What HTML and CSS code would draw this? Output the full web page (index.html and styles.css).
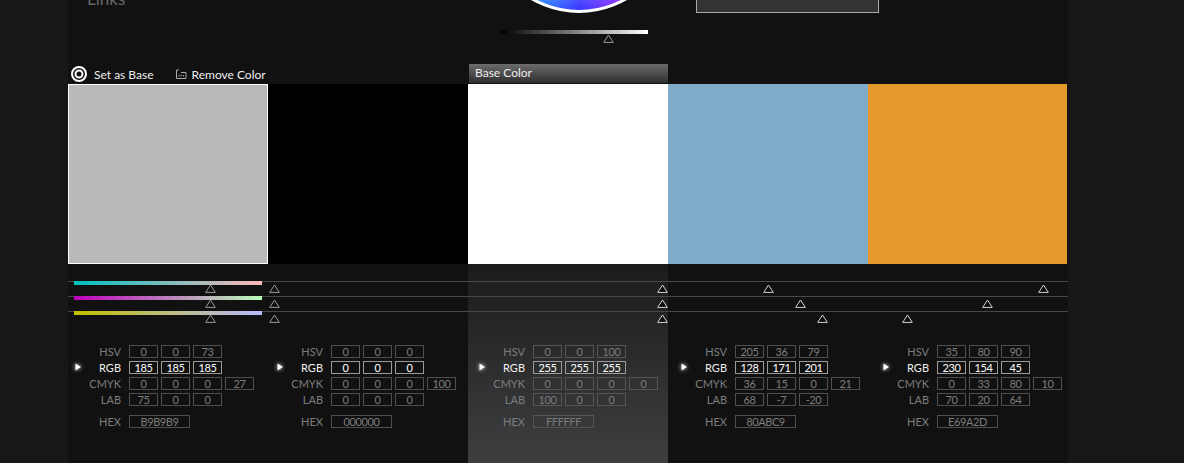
FILE: index.html
```html
<!DOCTYPE html>
<html lang="en">
<head>
  <meta charset="UTF-8">
  <title>Color Harmony</title>
  <link rel="stylesheet" href="styles.css">
</head>
<body>
  <div class="panel">
    <div class="top">
      <div class="links">Links</div>
      <div class="picker">
        <div class="wheel"></div>
        <div class="bright">
          <svg class="thumb thumb-dim" style="left:103px" width="11" height="9" viewBox="0 0 11 9"><polygon points="5.5,1 10.3,8.4 0.7,8.4"/></svg>
        </div>
      </div>
      <div class="preview"></div>
    </div>

    <div class="cols">
      <div class="col col-selected">
        <div class="head">
          <a class="action">
            <svg width="16" height="18" viewBox="0 0 16 18"><circle cx="8" cy="9" r="7" fill="none" stroke="#fff" stroke-width="2"/><circle cx="8" cy="9" r="3.5" fill="none" stroke="#fff" stroke-width="2"/></svg>
            Set as Base
          </a>
          <a class="action action-remove">
            <svg width="11" height="10" viewBox="0 0 11 10"><path d="M.5 1v8.500h9.500V3.500H5M.5 1H3M3 7.500V6M5 7.500V5.500M7.500 7.500V6" fill="none" stroke="#aaa"/></svg>
            Remove Color
          </a>
        </div>
        <div class="swatch swatch-current" style="background:#b9b9b9"></div>
        <div class="body">
          <div class="slider">
            <div class="bar bar-h"></div>
            <svg class="thumb thumb-dim" style="left:137px" width="11" height="9" viewBox="0 0 11 9"><polygon points="5.5,1 10.300,8.400 .7,8.400"/></svg>
          </div>
          <div class="slider">
            <div class="bar bar-s"></div>
            <svg class="thumb thumb-dim" style="left:137px" width="11" height="9" viewBox="0 0 11 9"><polygon points="5.5,1 10.300,8.400 .7,8.400"/></svg>
          </div>
          <div class="slider">
            <div class="bar bar-v"></div>
            <svg class="thumb thumb-dim" style="left:137px" width="11" height="9" viewBox="0 0 11 9"><polygon points="5.5,1 10.300,8.400 .7,8.400"/></svg>
          </div>
          <div class="readout">
            <div class="row"><span class="label">HSV</span><span class="val">0</span><span class="val">0</span><span class="val">73</span></div>
            <div class="row row-active"><svg class="marker" width="16" height="16" viewBox="0 0 16 16"><polygon points="5.500,4.500 11,8 5.500,11.500"/></svg><span class="label">RGB</span><span class="val">185</span><span class="val">185</span><span class="val">185</span></div>
            <div class="row"><span class="label">CMYK</span><span class="val">0</span><span class="val">0</span><span class="val">0</span><span class="val">27</span></div>
            <div class="row"><span class="label">LAB</span><span class="val">75</span><span class="val">0</span><span class="val">0</span></div>
            <div class="row row-hex"><span class="label">HEX</span><span class="val val-hex">B9B9B9</span></div>
          </div>
        </div>
      </div>

      <div class="col">
        <div class="head"></div>
        <div class="swatch" style="background:#000"></div>
        <div class="body">
          <div class="slider"><svg class="thumb thumb-dim" style="left:1px" width="11" height="9" viewBox="0 0 11 9"><polygon points="5.5,1 10.300,8.400 .7,8.400"/></svg></div>
          <div class="slider"><svg class="thumb thumb-dim" style="left:1px" width="11" height="9" viewBox="0 0 11 9"><polygon points="5.5,1 10.300,8.400 .7,8.400"/></svg></div>
          <div class="slider"><svg class="thumb thumb-dim" style="left:1px" width="11" height="9" viewBox="0 0 11 9"><polygon points="5.5,1 10.300,8.400 .7,8.400"/></svg></div>
          <div class="readout">
            <div class="row"><span class="label">HSV</span><span class="val">0</span><span class="val">0</span><span class="val">0</span></div>
            <div class="row row-active"><svg class="marker" width="16" height="16" viewBox="0 0 16 16"><polygon points="5.500,4.500 11,8 5.500,11.500"/></svg><span class="label">RGB</span><span class="val">0</span><span class="val">0</span><span class="val">0</span></div>
            <div class="row"><span class="label">CMYK</span><span class="val">0</span><span class="val">0</span><span class="val">0</span><span class="val">100</span></div>
            <div class="row"><span class="label">LAB</span><span class="val">0</span><span class="val">0</span><span class="val">0</span></div>
            <div class="row row-hex"><span class="label">HEX</span><span class="val val-hex">000000</span></div>
          </div>
        </div>
      </div>

      <div class="col col-base">
        <div class="head"><div class="base-tab">Base Color</div></div>
        <div class="swatch" style="background:#fff"></div>
        <div class="body">
          <div class="slider"><svg class="thumb" style="left:189px" width="11" height="9" viewBox="0 0 11 9"><polygon points="5.5,1 10.300,8.400 .7,8.400"/></svg></div>
          <div class="slider"><svg class="thumb" style="left:189px" width="11" height="9" viewBox="0 0 11 9"><polygon points="5.5,1 10.300,8.400 .7,8.400"/></svg></div>
          <div class="slider"><svg class="thumb" style="left:189px" width="11" height="9" viewBox="0 0 11 9"><polygon points="5.5,1 10.300,8.400 .7,8.400"/></svg></div>
          <div class="readout">
            <div class="row"><span class="label">HSV</span><span class="val">0</span><span class="val">0</span><span class="val">100</span></div>
            <div class="row row-active"><svg class="marker" width="16" height="16" viewBox="0 0 16 16"><polygon points="5.500,4.500 11,8 5.500,11.500"/></svg><span class="label">RGB</span><span class="val">255</span><span class="val">255</span><span class="val">255</span></div>
            <div class="row"><span class="label">CMYK</span><span class="val">0</span><span class="val">0</span><span class="val">0</span><span class="val">0</span></div>
            <div class="row"><span class="label">LAB</span><span class="val">100</span><span class="val">0</span><span class="val">0</span></div>
            <div class="row row-hex"><span class="label">HEX</span><span class="val val-hex">FFFFFF</span></div>
          </div>
        </div>
      </div>

      <div class="col">
        <div class="head"></div>
        <div class="swatch" style="background:#80abc9"></div>
        <div class="body">
          <div class="slider"><svg class="thumb" style="left:95px" width="11" height="9" viewBox="0 0 11 9"><polygon points="5.5,1 10.300,8.400 .7,8.400"/></svg></div>
          <div class="slider"><svg class="thumb" style="left:127px" width="11" height="9" viewBox="0 0 11 9"><polygon points="5.5,1 10.300,8.400 .7,8.400"/></svg></div>
          <div class="slider"><svg class="thumb" style="left:149px" width="11" height="9" viewBox="0 0 11 9"><polygon points="5.5,1 10.300,8.400 .7,8.400"/></svg></div>
          <div class="readout">
            <div class="row"><span class="label">HSV</span><span class="val">205</span><span class="val">36</span><span class="val">79</span></div>
            <div class="row row-active"><svg class="marker" width="16" height="16" viewBox="0 0 16 16"><polygon points="5.500,4.500 11,8 5.500,11.500"/></svg><span class="label">RGB</span><span class="val">128</span><span class="val">171</span><span class="val">201</span></div>
            <div class="row"><span class="label">CMYK</span><span class="val">36</span><span class="val">15</span><span class="val">0</span><span class="val">21</span></div>
            <div class="row"><span class="label">LAB</span><span class="val">68</span><span class="val">-7</span><span class="val">-20</span></div>
            <div class="row row-hex"><span class="label">HEX</span><span class="val val-hex">80ABC9</span></div>
          </div>
        </div>
      </div>

      <div class="col">
        <div class="head"></div>
        <div class="swatch swatch-last" style="background:#e69a2d"></div>
        <div class="body">
          <div class="slider"><svg class="thumb" style="left:170px" width="11" height="9" viewBox="0 0 11 9"><polygon points="5.5,1 10.300,8.400 .7,8.400"/></svg></div>
          <div class="slider"><svg class="thumb" style="left:114px" width="11" height="9" viewBox="0 0 11 9"><polygon points="5.5,1 10.300,8.400 .7,8.400"/></svg></div>
          <div class="slider"><svg class="thumb" style="left:34px" width="11" height="9" viewBox="0 0 11 9"><polygon points="5.5,1 10.300,8.400 .7,8.400"/></svg></div>
          <div class="readout">
            <div class="row"><span class="label">HSV</span><span class="val">35</span><span class="val">80</span><span class="val">90</span></div>
            <div class="row row-active"><svg class="marker" width="16" height="16" viewBox="0 0 16 16"><polygon points="5.500,4.500 11,8 5.500,11.500"/></svg><span class="label">RGB</span><span class="val">230</span><span class="val">154</span><span class="val">45</span></div>
            <div class="row"><span class="label">CMYK</span><span class="val">0</span><span class="val">33</span><span class="val">80</span><span class="val">10</span></div>
            <div class="row"><span class="label">LAB</span><span class="val">70</span><span class="val">20</span><span class="val">64</span></div>
            <div class="row row-hex"><span class="label">HEX</span><span class="val val-hex">E69A2D</span></div>
          </div>
        </div>
      </div>
    </div>
  </div>
</body>
</html>
```

FILE: styles.css
```css
html, body {
  height: 100%;
}
body {
  margin: 0;
  background-color: #171717;
  font-family: "Lato", "Open Sans", sans-serif;
  font-size: 11px;
  color: #7d7d7d;
  overflow: hidden;
}
.panel {
  width: 1000px;
  height: 463px;
  margin-left: 68px;
  background-color: #111;
  overflow: hidden;
}

/* top part, cut off by the window */
.top {
  display: flex;
  height: 64px;
  overflow: hidden;
}
.links {
  width: 397px;
  padding-left: 19px;
  margin-top: -13px;
  font-size: 17px;
  line-height: 24px;
  color: #666;
}
.picker {
  width: 190px;
}
.wheel {
  box-sizing: border-box;
  width: 190px;
  height: 190px;
  margin-top: -177px;
  border: 3px solid #fff;
  border-radius: 50%;
  background:
    radial-gradient(circle, #fff 0, rgba(255,255,255,0) 90%),
    conic-gradient(#ff0 0deg, #f00 60deg, #f0f 120deg, #00f 180deg, #0ff 240deg, #0f0 300deg, #ff0 360deg);
}
.bright {
  position: relative;
  width: 148px;
  height: 4px;
  margin: 17px 0 0 16px;
  background: linear-gradient(to right, #000, #fff);
}
.bright .thumb {
  top: 4px;
}
.preview {
  box-sizing: border-box;
  width: 183px;
  height: 13px;
  margin-left: 22px;
  background-color: #333;
  border: 1px solid #aaa;
  border-top: none;
}

.cols {
  display: grid;
  grid-template-columns: repeat(5, 200px);
}
.head {
  display: flex;
  align-items: center;
  height: 20px;
}
.action {
  display: flex;
  align-items: center;
  gap: 7px;
  height: 18px;
  margin-left: 3px;
  font-size: 12px;
  color: #eee;
}
.action-remove {
  gap: 5px;
  margin-left: 22px;
}
.base-tab {
  box-sizing: border-box;
  width: 200px;
  height: 19px;
  margin: -1px 0 0 1px;
  padding-left: 6px;
  font-size: 12px;
  line-height: 17px;
  color: #eee;
  background: linear-gradient(#6b6b6b, #2e2e2e);
}
.swatch {
  box-sizing: border-box;
  height: 180px;
}
.swatch-current {
  border: 1px solid #fff;
}
.swatch-last {
  margin-right: 1px;
}

.body {
  height: 199px;
  padding-top: 17px;
  box-sizing: border-box;
}
.col-base .body {
  background: linear-gradient(#1b1b1b, #3e3f41);
}
.slider {
  position: relative;
  box-sizing: border-box;
  height: 15px;
  border-top: 1px solid #484848;
}
.bar {
  position: absolute;
  left: 6px;
  top: -1px;
  width: 188px;
  height: 4px;
}
.bar-h {
  background: linear-gradient(to right, #00c0c0, #ffb9b9);
}
.bar-s {
  background: linear-gradient(to right, #c000c0, #b9ffb9);
}
.bar-v {
  background: linear-gradient(to right, #c0c000, #b9b9ff);
}
.thumb {
  position: absolute;
  top: 2px;
  display: block;
}
.thumb polygon {
  fill: #0b0b0b;
  stroke: #d5d5d5;
  stroke-width: 1;
}
.thumb-dim polygon {
  fill: #111;
  stroke: #999;
}

.readout {
  padding-top: 19px;
}
.col:nth-child(2) .readout { margin-left: 2px; }
.col:nth-child(3) .readout { margin-left: 4px; }
.col:nth-child(4) .readout { margin-left: 6px; }
.col:nth-child(5) .readout { margin-left: 8px; }
.row {
  position: relative;
  display: flex;
  gap: 3px;
  height: 13px;
  margin-bottom: 3px;
  line-height: 13px;
}
.row-hex {
  margin-top: 9px;
}
.label {
  width: 53px;
  margin-right: 5px;
  text-align: right;
}
.val {
  box-sizing: border-box;
  width: 29px;
  height: 13px;
  border: 1px solid #4f4f4f;
  line-height: 11px;
  text-align: center;
  letter-spacing: -0.4px;
}
.val-hex {
  width: 61px;
}
.row-active .label {
  color: #eee;
}
.row-active .val {
  color: #fff;
  border-color: #9a9a9a;
}
.marker {
  position: absolute;
  left: 2px;
  top: -2px;
  filter: drop-shadow(0 0 2px #fff);
}
.marker polygon {
  fill: #fff;
}
.col-base .val {
  color: #7a7a7a;
  border-color: #555;
}
.col-base .row-active .val {
  color: #fff;
  border-color: #9a9a9a;
}
```
